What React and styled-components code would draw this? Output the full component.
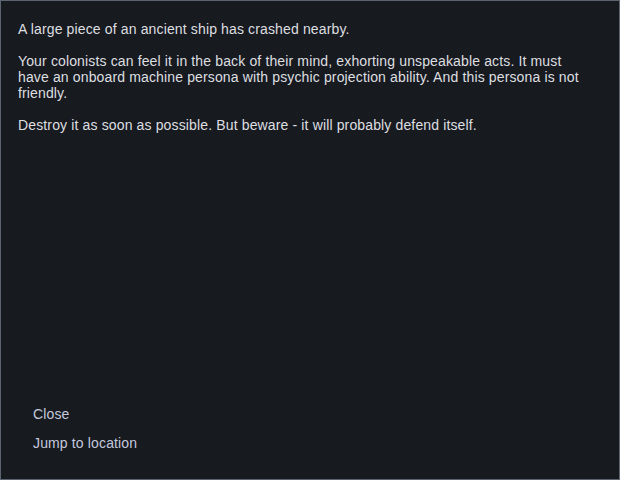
import React from "react";
import styled, { createGlobalStyle } from "styled-components";

const Global = createGlobalStyle`
  html, body { margin: 0; padding: 0; background: #171a1f; }
  * { box-sizing: border-box; }
`;

const Panel = styled.div`
  width: 620px;
  height: 480px;
  background: #171a1f;
  border: 1px solid #5c6470;
  display: flex;
  flex-direction: column;
  justify-content: space-between;
  font-family: "Liberation Sans", Arial, sans-serif;
  font-size: 14px;
  line-height: 16px;
  letter-spacing: 0.14px;
`;

const Body = styled.div`
  padding: 20px 38px 0 17px;
  color: #dedfe0;
`;

const Para = styled.p`
  margin: 0 0 16px 0;
`;

const Actions = styled.div`
  display: flex;
  flex-direction: column;
  gap: 13px;
  padding: 0 0 28px 32px;
`;

const Action = styled.span`
  color: #c4c9de;
  cursor: pointer;
`;

export default function App() {
  return (
    <>
      <Global />
      <Panel>
        <Body>
          <Para>A large piece of an ancient ship has crashed nearby.</Para>
          <Para>
            Your colonists can feel it in the back of their mind, exhorting unspeakable acts. It must
            have an onboard machine persona with psychic projection ability. And this persona is not
            friendly.
          </Para>
          <Para>Destroy it as soon as possible. But beware - it will probably defend itself.</Para>
        </Body>
        <Actions>
          <Action>Close</Action>
          <Action>Jump to location</Action>
        </Actions>
      </Panel>
    </>
  );
}
